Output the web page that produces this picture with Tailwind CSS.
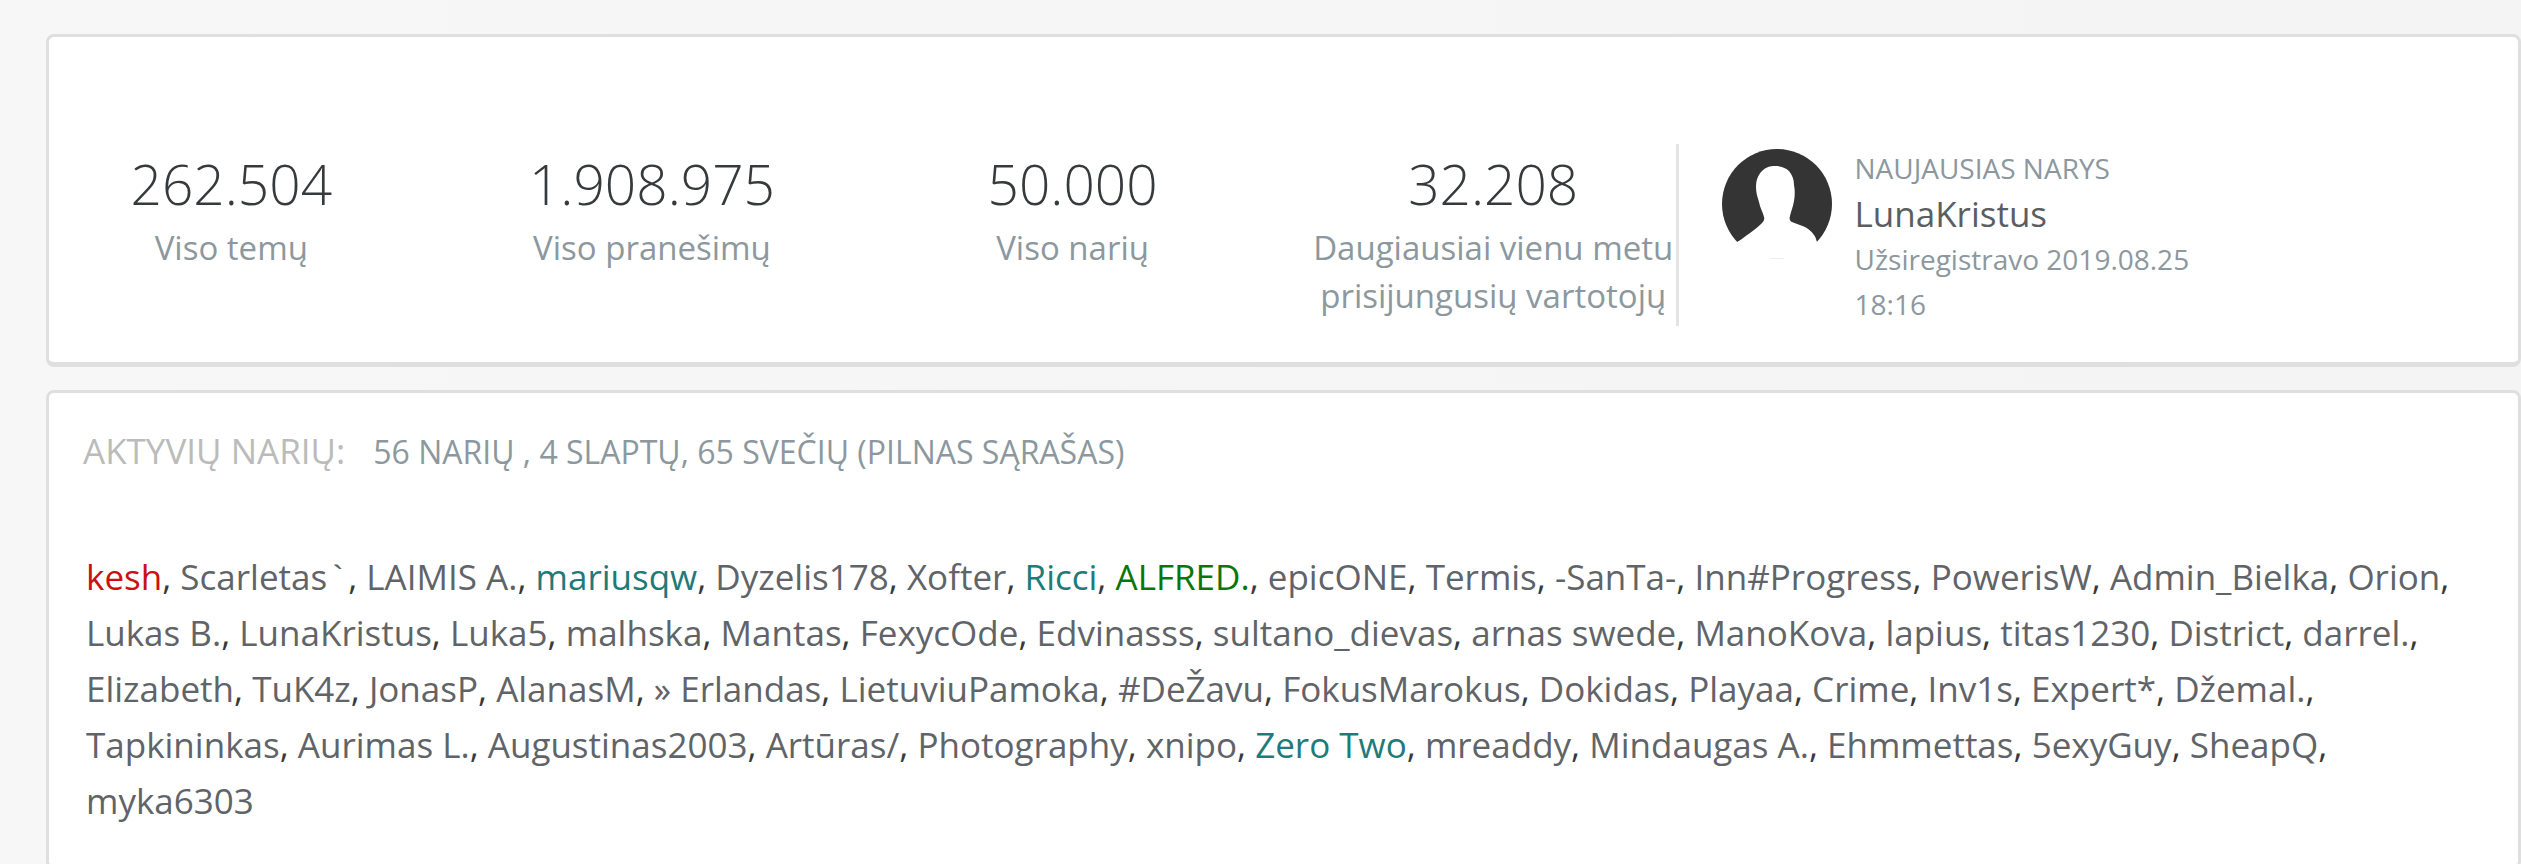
<!DOCTYPE html>
<html lang="lt">
<head>
  <meta charset="UTF-8">
  <meta name="viewport" content="width=device-width, initial-scale=1.0">
  <title>Forumo statistika</title>
  <script src="https://cdn.jsdelivr.net/npm/@tailwindcss/browser@4"></script>
</head>
<body class="min-h-screen overflow-x-hidden bg-linear-to-r from-[#f7f7f7] to-[#f4f4f4] font-['Open_Sans',sans-serif] text-[#373a3c]">
  <main class="pt-[34px] pl-[46px]">

    <!-- Forum totals + newest member -->
    <section class="flex items-start rounded-lg border-3 border-b-5 border-[#dfdfdf] bg-white pt-[107px] pb-[35px]">
      <dl class="grid w-[66%] grid-cols-4 gap-x-14 border-r-3 border-[#e4e4e4] pb-1.5 text-center">
        <div class="flex flex-col-reverse justify-end">
          <dt class="-mx-2 text-[33px] leading-[48px] text-[#8c989e]">Viso temų</dt>
          <dd class="text-[55px] leading-[80px] font-light">262.504</dd>
        </div>
        <div class="flex flex-col-reverse justify-end">
          <dt class="-mx-2 text-[33px] leading-[48px] text-[#8c989e]">Viso pranešimų</dt>
          <dd class="text-[55px] leading-[80px] font-light">1.908.975</dd>
        </div>
        <div class="flex flex-col-reverse justify-end">
          <dt class="-mx-2 text-[33px] leading-[48px] text-[#8c989e]">Viso narių</dt>
          <dd class="text-[55px] leading-[80px] font-light">50.000</dd>
        </div>
        <div class="flex flex-col-reverse justify-end">
          <dt class="-mx-2 text-[33px] leading-[48px] text-[#8c989e]">Daugiausiai vienu metu prisijungusių vartotojų</dt>
          <dd class="text-[55px] leading-[80px] font-light">32.208</dd>
        </div>
      </dl>

      <div class="flex gap-[23px] pl-[43px]">
        <a href="#" class="mt-[5px] shrink-0" aria-label="LunaKristus">
          <svg class="size-[110px]" viewBox="0 0 110 110">
            <circle cx="55" cy="55" r="55" fill="#343434"/>
            <path fill="#fff" d="M-2 111V99H6L15 93C19 91 23 87 28 84C32 81 36 78 39 75C41 73 43 71 42 68C41 63 38 59 37 53C35 47 34 43 34 38C34 31 36 26 40 22C44 18 48 17 53 17C58 17 63 18 67 22C70 26 72 30 72 36C73 41 73 46 72 52C71 58 69 62 68 67C67 70 68 72 70 73C74 75 79 76 83 78C87 80 90 83 92 86C94 88 94 91 95 93L112 99V111Z"/>
            <path stroke="#eee" d="M48 109.5h14"/>
          </svg>
        </a>
        <div class="max-w-[350px] pt-0.5 text-[28px] leading-[45px] text-[#8c989e]">
          <h2 class="uppercase">Naujausias narys</h2>
          <a href="#" class="block text-[35px] leading-[46px] text-[#5a5e62]">LunaKristus</a>
          <p>Užsiregistravo 2019.08.25 18:16</p>
        </div>
      </div>
    </section>

    <!-- Who is online -->
    <section class="mt-[23px] rounded-lg border-3 border-b-5 border-[#dfdfdf] bg-white px-[34px] pb-9">
      <h2 class="flex items-baseline gap-7 pt-[33px] text-[35px] leading-[50px] text-[#bbb] uppercase">
        Aktyvių narių:
        <span class="text-[32px] text-[#8c989e]">56 narių , 4 slaptų, 65 svečių (<a href="#">pilnas sąrašas</a>)</span>
      </h2>
      <p class="px-[3px] pt-[72px] text-[35px] leading-[56px] [&_a]:text-[#606468]">
        <a href="#" class="text-[#cc1010]!">kesh</a>,
        <a href="#">Scarletas<span class="font-['Liberation_Mono',monospace] leading-none">`</span></a>,
        <a href="#">LAIMIS A.</a>,
        <a href="#" class="text-[#1f7a7a]!">mariusqw</a>,
        <a href="#">Dyzelis178</a>,
        <a href="#">Xofter</a>,
        <a href="#" class="text-[#1f7a7a]!">Ricci</a>,
        <a href="#" class="text-[#0a750a]!">ALFRED.</a>,
        <a href="#">epicONE</a>,
        <a href="#">Termis</a>,
        <a href="#">-SanTa-</a>,
        <a href="#">Inn#Progress</a>,
        <a href="#">PowerisW</a>,
        <a href="#">Admin_Bielka</a>,
        <a href="#">Orion</a>,
        <a href="#">Lukas B.</a>,
        <a href="#">LunaKristus</a>,
        <a href="#">Luka5</a>,
        <a href="#">malhska</a>,
        <a href="#">Mantas</a>,
        <a href="#">FexycOde</a>,
        <a href="#">Edvinasss</a>,
        <a href="#">sultano_dievas</a>,
        <a href="#">arnas swede</a>,
        <a href="#">ManoKova</a>,
        <a href="#">lapius</a>,
        <a href="#">titas1230</a>,
        <a href="#">District</a>,
        <a href="#">darrel.</a>,
        <a href="#">Elizabeth</a>,
        <a href="#">TuK4z</a>,
        <a href="#">JonasP</a>,
        <a href="#">AlanasM</a>,
        <a href="#">» Erlandas</a>,
        <a href="#">LietuviuPamoka</a>,
        <a href="#">#DeŽavu</a>,
        <a href="#">FokusMarokus</a>,
        <a href="#">Dokidas</a>,
        <a href="#">Playaa</a>,
        <a href="#">Crime</a>,
        <a href="#">Inv1s</a>,
        <a href="#">Expert*</a>,
        <a href="#">Džemal.</a>,
        <a href="#">Tapkininkas</a>,
        <a href="#">Aurimas L.</a>,
        <a href="#">Augustinas2003</a>,
        <a href="#">Artūras/</a>,
        <a href="#">Photography</a>,
        <a href="#">xnipo</a>,
        <a href="#" class="text-[#1f7a7a]!">Zero Two</a>,
        <a href="#">mreaddy</a>,
        <a href="#">Mindaugas A.</a>,
        <a href="#">Ehmmettas</a>,
        <a href="#">5exyGuy</a>,
        <a href="#">SheapQ</a>,
        <a href="#">myka6303</a>
      </p>
    </section>

  </main>
</body>
</html>
